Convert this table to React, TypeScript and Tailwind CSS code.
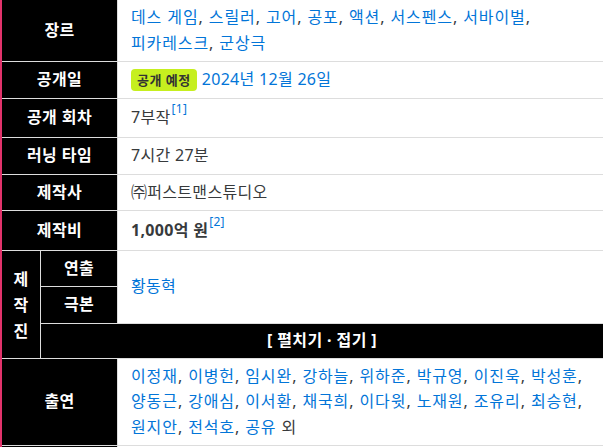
const Label = ({ children, className = '' }: { children?: React.ReactNode; className?: string }) => (
  <div className={`flex items-center justify-center bg-black font-bold tracking-[0.4px] text-white ${className}`}>
    {children}
  </div>
);

const Cell = ({ children, className = '' }: { children?: React.ReactNode; className?: string }) => (
  <div className={`flex items-center bg-white pl-[13px] pr-[10px] break-keep text-[#373a3c] ${className}`}>
    <div>{children}</div>
  </div>
);

const Link = ({ children }: { children: React.ReactNode }) => <span className="text-[#0275d8]">{children}</span>;

const Ref = ({ n }: { n: number }) => (
  <sup className="relative -top-[2px] ml-[1px] align-top text-[12px] leading-none text-[#0275d8]">[{n}]</sup>
);

// 줄바꿈 위치는 원본에 맞춤
const genreLines = [
  ['데스 게임', '스릴러', '고어', '공포', '액션', '서스펜스', '서바이벌'],
  ['피카레스크', '군상극'],
];
const castLines = [
  ['이정재', '이병헌', '임시완', '강하늘', '위하준', '박규영', '이진욱', '박성훈'],
  ['양동근', '강애심', '이서환', '채국희', '이다윗', '노재원', '조유리', '최승현'],
  ['원지안', '전석호', '공유'],
];

const LinkLines = ({ lines, tail }: { lines: string[][]; tail?: string }) => (
  <div className="tracking-[0.9px]">
    {lines.map((line, li) => (
      <div key={li} className="whitespace-nowrap">
        {line.map((item, i) => {
          const last = li === lines.length - 1 && i === line.length - 1;
          return (
            <span key={item}>
              <Link>{item}</Link>
              {last ? tail : i < line.length - 1 ? ', ' : ','}
            </span>
          );
        })}
      </div>
    ))}
  </div>
);

const App = () => {
  return (
    <div
      className="h-[447px] w-[603px] overflow-hidden bg-white text-[16px] leading-[25.5px] tracking-[0.3px]"
      style={{ fontFamily: "'Noto Sans', 'Noto Sans CJK KR', sans-serif" }}
    >
      <div className="grid grid-cols-[38px_76px_1fr] grid-rows-[61px_36px_38px_36px_35px_39px_35px_36px_34px_86px_20px] gap-px border-l-2 border-[#e2336b] bg-[#dddddd]">
        <Label className="col-span-2">장르</Label>
        <Cell>
          <LinkLines lines={genreLines} />
        </Cell>

        <Label className="col-span-2">공개일</Label>
        <Cell>
          <span className="mr-[5px] inline-block rounded-[4px] bg-[#c6ef1f] px-[6px] text-[13px] leading-[22px] font-bold tracking-[0.5px] text-[#333]">
            공개 예정
          </span>
          <Link>2024년 12월 26일</Link>
        </Cell>

        <Label className="col-span-2">공개 회차</Label>
        <Cell>
          7부작
          <Ref n={1} />
        </Cell>

        <Label className="col-span-2">러닝 타임</Label>
        <Cell>7시간 27분</Cell>

        <Label className="col-span-2">제작사</Label>
        <Cell>㈜퍼스트맨스튜디오</Cell>

        <Label className="col-span-2">제작비</Label>
        <Cell>
          <b className="font-bold">1,000억 원</b>
          <Ref n={2} />
        </Cell>

        <Label className="row-span-3 flex-col leading-[26px]">
          <span>제</span>
          <span>작</span>
          <span>진</span>
        </Label>
        <Label>연출</Label>
        <Cell className="row-span-2">
          <Link>황동혁</Link>
        </Cell>
        <Label>극본</Label>
        <Label className="col-span-2">[ 펼치기 · 접기 ]</Label>

        <Label className="col-span-2">출연</Label>
        <Cell>
          <LinkLines lines={castLines} tail=" 외" />
        </Cell>

        <Label className="col-span-2" />
        <Cell />
      </div>
    </div>
  );
};

export default App;
